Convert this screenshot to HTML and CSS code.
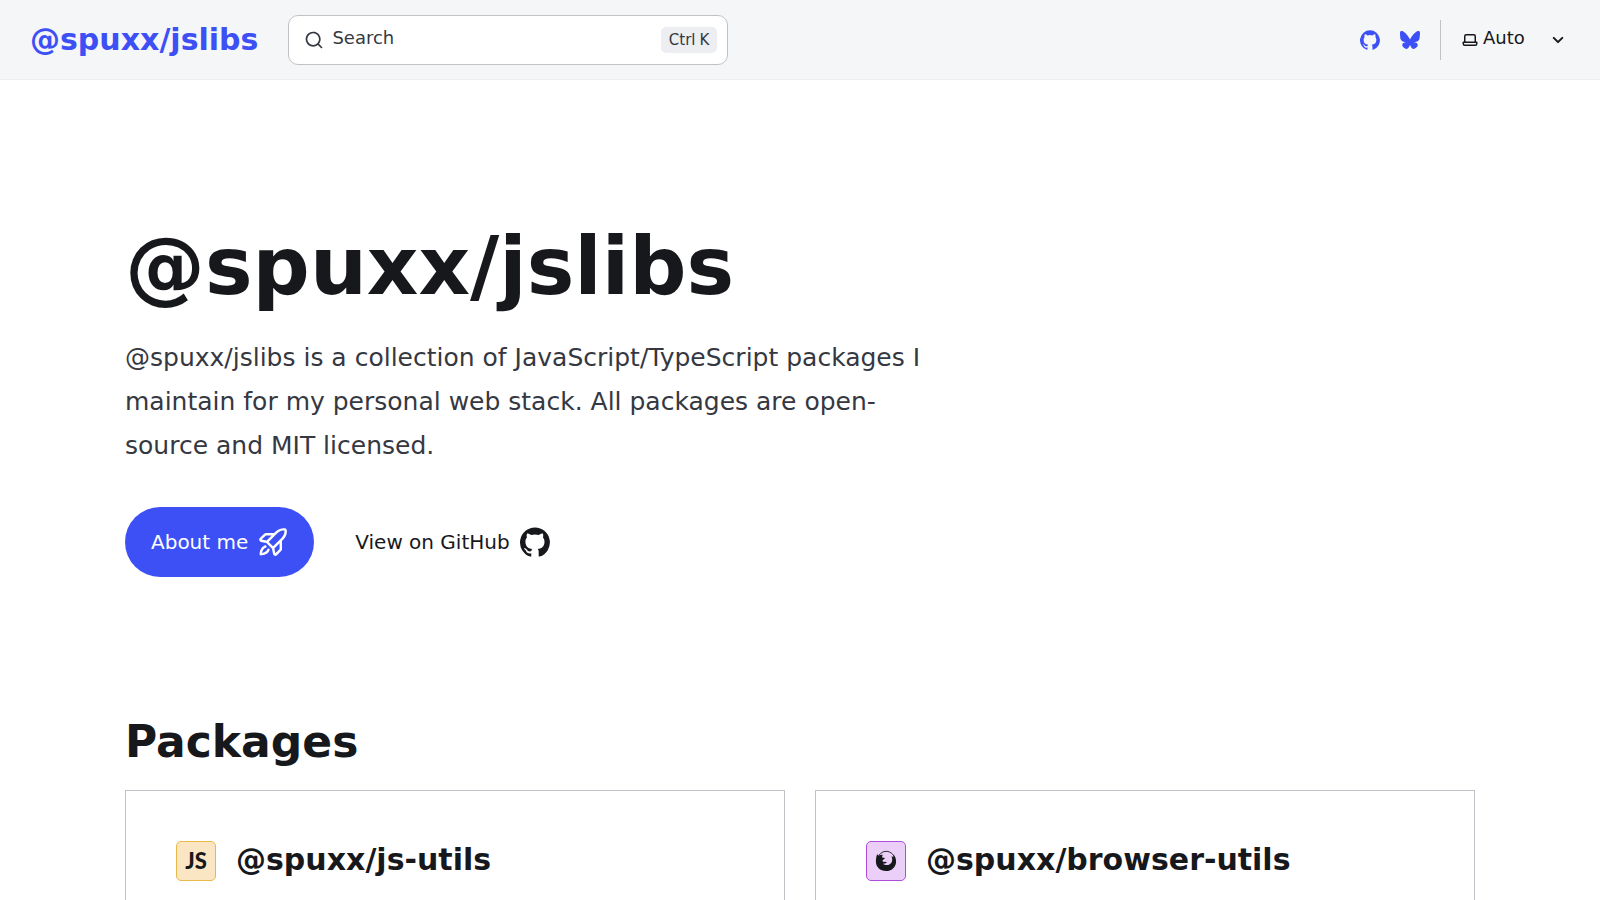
FILE: index.html
```html
<!DOCTYPE html>
<html lang="en">
<head>
<meta charset="utf-8">
<title>@spuxx/jslibs</title>
<link rel="stylesheet" href="styles.css">
</head>
<body>
<svg class="sprite" aria-hidden="true">
  <symbol id="github" viewBox="0 0 24 24"><path d="M12 .3a12 12 0 0 0-3.8 23.38c.6.12.83-.26.83-.57L9 21.07c-3.34.72-4.04-1.61-4.04-1.61-.55-1.39-1.34-1.76-1.34-1.76-1.08-.74.09-.73.09-.73 1.2.09 1.83 1.24 1.83 1.24 1.08 1.83 2.81 1.3 3.5 1 .1-.78.42-1.31.76-1.61-2.67-.3-5.47-1.33-5.47-5.93 0-1.31.47-2.38 1.24-3.22-.14-.3-.54-1.52.1-3.18 0 0 1-.32 3.3 1.23a11.5 11.5 0 0 1 6 0c2.28-1.55 3.29-1.23 3.29-1.23.64 1.66.24 2.88.12 3.18a4.65 4.65 0 0 1 1.23 3.22c0 4.61-2.8 5.63-5.48 5.92.42.36.81 1.1.81 2.22l-.01 3.29c0 .31.2.69.82.57A12 12 0 0 0 12 .3Z"/></symbol>
</svg>
<header class="header">
  <a class="site-title" href="#">@spuxx/jslibs</a>
  <button class="search" type="button">
    <svg class="icon" viewBox="0 0 24 24" aria-hidden="true"><path d="M21.71 20.29 18 16.61A9 9 0 1 0 16.61 18l3.68 3.68a.999.999 0 0 0 1.42 0 1 1 0 0 0 0-1.39ZM11 18a7 7 0 1 1 0-14 7 7 0 0 1 0 14Z"/></svg>
    <span class="search-label">Search</span>
    <span class="keys"><kbd>Ctrl</kbd><kbd>K</kbd></span>
  </button>
  <div class="tools">
    <div class="social">
      <a href="#" aria-label="GitHub"><svg class="icon" aria-hidden="true"><use href="#github"/></svg></a>
      <a href="#" aria-label="Bluesky"><svg class="icon" viewBox="0 0 24 24" aria-hidden="true"><path d="M5.2 2.8C8 4.9 10.9 9 12 11.3c1.1-2.300 4-6.400 6.800-8.500C20.800 1.300 24 .1 24 3.800c0 .7-.4 6.200-.7 7.100-.9 3.100-4 3.900-6.800 3.400 4.900.8 6.100 3.600 3.400 6.400-5.100 5.200-7.300-1.300-7.900-3-.6 1.700-2.800 8.200-7.900 3-2.700-2.800-1.500-5.600 3.400-6.400-2.800.5-5.900-.3-6.800-3.400C.4 10 0 4.500 0 3.800 0 .1 3.200 1.300 5.200 2.800Z"/></svg></a>
    </div>
    <label class="theme">
      <svg class="icon laptop" viewBox="0 0 24 24" aria-hidden="true"><path d="M21 14h-1V7a3 3 0 0 0-3-3H7a3 3 0 0 0-3 3v7H3a1 1 0 0 0-1 1v2a3 3 0 0 0 3 3h14a3 3 0 0 0 3-3v-2a1 1 0 0 0-1-1ZM6 7a1 1 0 0 1 1-1h10a1 1 0 0 1 1 1v7H6V7Zm14 10a1 1 0 0 1-1 1H5a1 1 0 0 1-1-1v-1h16v1Z"/></svg>
      <select aria-label="Select theme"><option>Auto</option><option>Dark</option><option>Light</option></select>
      <svg class="icon caret" viewBox="0 0 24 24" aria-hidden="true"><path d="M17 9.170a1 1 0 0 0-1.410 0L12 12.710 8.460 9.170a1 1 0 1 0-1.410 1.420l4.240 4.240a1.002 1.002 0 0 0 1.420 0L17 10.590a1.002 1.002 0 0 0 0-1.420Z"/></svg>
    </label>
  </div>
</header>
<main class="content">
  <section class="hero">
    <h1>@spuxx/jslibs</h1>
    <p class="tagline">@spuxx/jslibs is a collection of JavaScript/TypeScript packages I maintain for my personal web stack. All packages are open-source and MIT licensed.</p>
    <div class="actions">
      <a class="action primary" href="#">About me
        <svg class="icon" viewBox="0 0 24 24" aria-hidden="true"><path fill-rule="evenodd" d="M1.440 8.855v-.001l3.527-3.516c.34-.344.802-.541 1.285-.548h6.649l.947-.947c3.070-3.070 6.207-3.072 7.620-2.868a1.821 1.821 0 0 1 1.557 1.557c.204 1.413.203 4.550-2.868 7.620l-.946.946v6.649a1.845 1.845 0 0 1-.549 1.286l-3.516 3.528a1.844 1.844 0 0 1-3.110-.944l-.858-4.275-4.520-4.520-2.310-.463-1.964-.394A1.847 1.847 0 0 1 .98 10.693a1.843 1.843 0 0 1 .46-1.838Zm5.379 2.017-3.873-.776L6.320 6.733h4.638l-4.140 4.140Zm8.403-5.655c2.459-2.460 4.856-2.463 5.890-2.330.134 1.035.13 3.432-2.329 5.891l-6.710 6.710-3.561-3.560 6.710-6.711Zm-1.318 15.837-.776-3.873 4.140-4.140v4.639l-3.364 3.374Z"/><path d="M9.318 18.345a.972.972 0 0 0-1.860-.561c-.482 1.435-1.687 2.204-2.934 2.619a8.220 8.220 0 0 1-1.230.302c.062-.365.157-.79.303-1.229.415-1.247 1.184-2.452 2.620-2.935a.971.971 0 1 0-.62-1.842c-.12.04-.236.084-.35.13-2.020.828-3.012 2.588-3.493 4.033a10.383 10.383 0 0 0-.51 2.845l-.001.016v.063c0 .536.434.972.97.972H2.240a7.210 7.210 0 0 0 .878-.065c.527-.063 1.248-.19 2.020-.447 1.445-.48 3.205-1.472 4.033-3.494a5.828 5.828 0 0 0 .147-.407Z"/></svg></a>
      <a class="action" href="#">View on GitHub
        <svg class="icon" aria-hidden="true"><use href="#github"/></svg></a>
    </div>
  </section>
  <section class="packages">
    <h2>Packages</h2>
    <div class="cards">
      <article class="card">
        <span class="badge orange" aria-hidden="true">JS</span>
        <h3>@spuxx/js-utils</h3>
      </article>
      <article class="card">
        <span class="badge purple" aria-hidden="true"><svg class="icon" viewBox="0 0 24 24"><path d="M2.300 4.500 4 6C5.500 5.200 7 5 8.600 5.200 7.800 6.200 7.500 7.300 8 8.300l2.800.5c-.1 1.100-2 1.500-2.500 2.500l.2 1.500 4.500.4c-.8 1.500-2.400 1.900-4.600 1.700 3.400 2.600 8.400 1.800 9.900-1.900.8-2.200.5-4.500-.3-6.500l2 1.300c.1-1.300-.2-2.500-.9-3.600 2.800 2.100 4 5.300 3.900 8.800C22.600 18.800 18 23 12 23 5.600 23 .8 18.500 1 12.300c0-2.500.4-5.500 1.300-7.800Z"/><path fill="none" stroke="currentColor" d="M4.500 5.500C8.500 .2 15.500 .2 19.500 5"/></svg></span>
        <h3>@spuxx/browser-utils</h3>
      </article>
    </div>
  </section>
</main>
</body>
</html>
```

FILE: styles.css
```css
* { box-sizing: border-box; margin: 0; }

body {
  font-family: "DejaVu Sans", sans-serif;
  font-size: 20px;
  line-height: 1.75;
  color: #353841;
  background: #fff;
}

a { color: inherit; text-decoration: none; }

.sprite { display: none; }

.icon {
  width: 20px;
  height: 20px;
  flex: none;
  fill: currentColor;
}

.header {
  display: flex;
  align-items: center;
  gap: 30px;
  height: 80px;
  padding: 0 30px;
  background: #f5f6f8;
  border-bottom: 1px solid #eceef2;
}

.site-title {
  font-size: 30px;
  font-weight: 700;
  line-height: 36px;
  color: #3d50f5;
}

.search {
  display: flex;
  align-items: center;
  gap: 8px;
  width: 440px;
  height: 50px;
  padding: 0 10px 0 15px;
  border: 1px solid #c0c2c7;
  border-radius: 10px;
  background: #fff;
  color: #353841;
  font: 18px/24px "DejaVu Sans", sans-serif;
}

.search-label { padding-bottom: 4px; }

.keys {
  display: flex;
  gap: 4px;
  margin-left: auto;
  padding: 0 8px;
  border-radius: 5px;
  background: #eceef2;
}

kbd { font: 15px/26px "DejaVu Sans", sans-serif; }

.tools {
  display: flex;
  align-items: center;
  margin-left: auto;
}

.social {
  display: flex;
  align-items: center;
  gap: 20px;
  height: 40px;
  padding-right: 20px;
  border-right: 1px solid #c0c2c7;
  color: #3d50f5;
}

.social a { display: flex; }

.theme {
  display: flex;
  align-items: center;
  padding-left: 20px;
  color: #17181c;
}

.laptop { width: 18px; height: 18px; }

.caret { width: 24px; height: 24px; }

.theme select {
  width: 67px;
  padding: 0 0 4px 4px;
  border: 0;
  appearance: none;
  background: transparent;
  color: inherit;
  font: 18px/24px "DejaVu Sans", sans-serif;
}

.content {
  max-width: 1350px;
  margin: 0 auto;
}

.hero { padding: 139px 0; }

h1, h2, h3 { color: #17181c; }

h1 { font-size: 80px; line-height: 96px; }

.tagline {
  max-width: 820px;
  margin-top: 21px;
  font-size: 25px;
  line-height: 44px;
}

.actions {
  display: flex;
  gap: 15px;
  margin-top: 39px;
}

.action {
  display: flex;
  align-items: center;
  gap: 10px;
  height: 70px;
  padding: 0 26px;
  border-radius: 35px;
  color: #17181c;
}

.action .icon { width: 30px; height: 30px; }

.primary { background: #3d50f5; color: #fff; }

h2 { font-size: 44px; line-height: 52px; }

.cards {
  display: grid;
  grid-template-columns: 1fr 1fr;
  gap: 30px;
  margin-top: 22px;
}

.card {
  display: flex;
  align-items: flex-start;
  gap: 20px;
  min-height: 240px;
  padding: 50px;
  border: 1px solid #c0c2c7;
}

.card h3 { font-size: 30px; line-height: 37px; }

.badge {
  display: flex;
  align-items: center;
  justify-content: center;
  width: 40px;
  height: 40px;
  border: 1px solid;
  border-radius: 5px;
}

.badge .icon { width: 22px; height: 22px; color: #17181c; }

.orange {
  border-color: #e9b949;
  background: #fbe6c4;
  color: #17181c;
  font: 900 22px/24px Lato, sans-serif;
}

.purple {
  border-color: #b04ddd;
  background: #ebcff8;
  color: #b04ddd;
}
```
